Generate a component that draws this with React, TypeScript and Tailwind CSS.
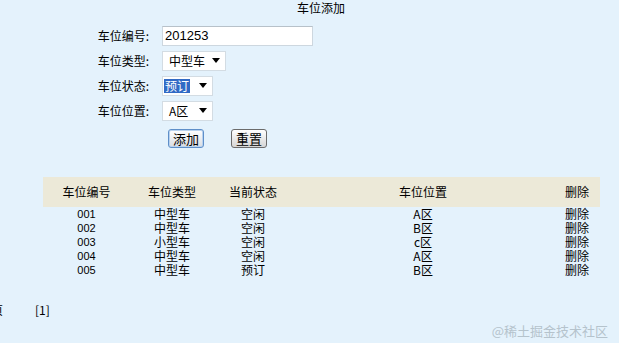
import React from 'react';

const rows = [
  { no: '001', type: '中型车', state: '空闲', pos: 'A区' },
  { no: '002', type: '中型车', state: '空闲', pos: 'B区' },
  { no: '003', type: '小型车', state: '空闲', pos: 'c区' },
  { no: '004', type: '中型车', state: '空闲', pos: 'A区' },
  { no: '005', type: '中型车', state: '预订', pos: 'B区' },
];

function Arrow() {
  return (
    <svg width="8" height="5" viewBox="0 0 8 5" className="shrink-0">
      <path d="M0 0h8L4 5z" fill="#000" />
    </svg>
  );
}

function FakeSelect({ value, width, selected }: { value: string; width: string; selected?: boolean }) {
  return (
    <div className={`flex h-[20px] items-center justify-between bg-white border border-[#d3dce3] pl-[1px] pr-[5px] ${width}`}>
      <span className={selected ? 'bg-[#316ac5] text-white px-[1px] leading-[14px]' : 'pl-[5px]'}>{value}</span>
      <Arrow />
    </div>
  );
}

function FormRow({ label, children }: { label: string; children: React.ReactNode }) {
  return (
    <div className="flex items-center h-[25px]">
      <div className="w-[150px] text-right pr-[1px]">{label}:</div>
      <div className="ml-[12px]">{children}</div>
    </div>
  );
}

export default function App() {
  const cols = 'grid grid-cols-[87px_84px_78px_262px_46px] text-center';
  return (
    <div
      className="relative w-full h-[343px] overflow-hidden bg-[#e4f2fc] text-[12px] text-black"
      style={{ fontFamily: '"Noto Sans CJK SC", "DejaVu Sans", sans-serif' }}
    >
      <div className="pl-[297px] leading-[15px]">车位添加</div>

      <div className="mt-[8px]">
        <FormRow label="车位编号">
          <div
            className="h-[20px] w-[151px] bg-white border border-[#cdd7df] border-t-[#b7c1c9] pl-[2px] leading-[18px] text-[13px]"
            style={{ fontFamily: '"Liberation Sans", sans-serif' }}
          >
            201253
          </div>
        </FormRow>
        <FormRow label="车位类型">
          <FakeSelect value="中型车" width="w-[64px]" />
        </FormRow>
        <FormRow label="车位状态">
          <FakeSelect value="预订" width="w-[51px]" selected />
        </FormRow>
        <FormRow label="车位位置">
          <FakeSelect value="A区" width="w-[51px]" />
        </FormRow>
        <div className="flex mt-[6px] ml-[168px] gap-[27px]">
          <button className="h-[19px] w-[36px] rounded-[3px] border border-[#5e8fc9] bg-gradient-to-b from-white to-[#d9dde2] text-[13px] leading-[16px] shadow-[inset_0_0_0_1px_#b9d2ee]">
            添加
          </button>
          <button className="h-[19px] w-[36px] rounded-[3px] border border-[#6b6b6b] bg-gradient-to-b from-white to-[#d6d6d6] text-[13px] leading-[16px]">
            重置
          </button>
        </div>
      </div>

      <div className="mt-[29px] ml-[43px] w-[557px]">
        <div className={`${cols} h-[30px] items-center bg-[#ece9d8]`}>
          <div>车位编号</div>
          <div>车位类型</div>
          <div>当前状态</div>
          <div>车位位置</div>
          <div>删除</div>
        </div>
        {rows.map((r) => (
          <div key={r.no} className={`${cols} h-[14px] leading-[14px]`}>
            <div className="text-[11px]" style={{ fontFamily: '"Liberation Sans", sans-serif' }}>{r.no}</div>
            <div>{r.type}</div>
            <div>{r.state}</div>
            <div>{r.pos}</div>
            <div>删除</div>
          </div>
        ))}
      </div>

      <div className="flex mt-[26px] leading-[14px]">
        <span className="-ml-[9px]">页</span>
        <span className="ml-[32px]">[1]</span>
      </div>

      <div className="absolute right-[11px] bottom-[3px] text-[13px] text-[#b5c3cc]">@稀土掘金技术社区</div>
    </div>
  );
}
